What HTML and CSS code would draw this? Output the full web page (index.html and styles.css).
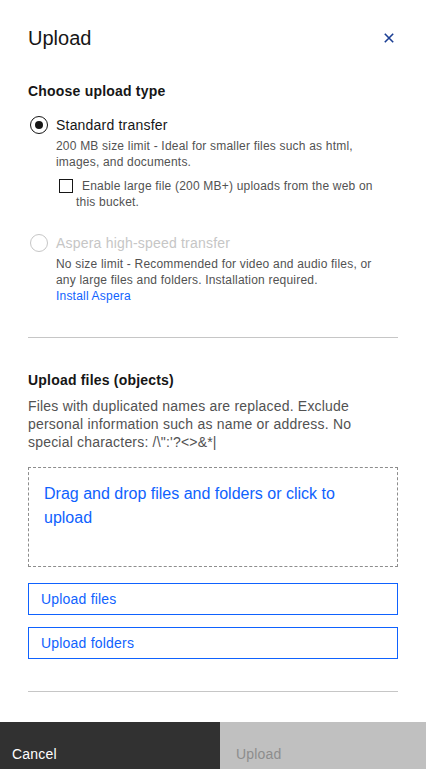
FILE: index.html
```html
<!DOCTYPE html>
<html lang="en">
<head>
<meta charset="utf-8">
<title>Upload</title>
<link rel="stylesheet" href="styles.css">
</head>
<body>
<div class="modal">
  <div class="header">
    <h1 class="title">Upload</h1>
    <button class="close" aria-label="Close">
      <svg width="10" height="10" viewBox="0 0 10 10"><path d="M0.8 0.8L9.2 9.2M9.2 0.8L0.8 9.2" stroke="#1c3f94" stroke-width="1.6" fill="none"/></svg>
    </button>
  </div>
  <div class="content">
    <h2 class="section-title first">Choose upload type</h2>

    <div class="radio-row">
      <span class="radio checked"></span>
      <span class="radio-label">Standard transfer</span>
    </div>
    <div class="option-body">
      <p class="desc">200 MB size limit - Ideal for smaller files such as html, images, and documents.</p>
      <p class="check-line"><span class="checkbox"></span>Enable large file (200 MB+) uploads from the web on this bucket.</p>
    </div>

    <div class="radio-row aspera">
      <span class="radio disabled"></span>
      <span class="radio-label disabled">Aspera high-speed transfer</span>
    </div>
    <div class="option-body">
      <p class="desc">No size limit - Recommended for video and audio files, or any large files and folders. Installation required.<br><a class="link" href="#">Install Aspera</a></p>
    </div>

    <hr class="divider first-divider">

    <h2 class="section-title second">Upload files (objects)</h2>
    <p class="note">Files with duplicated names are replaced. Exclude personal information such as name or address. No special characters: /\":'?&lt;&gt;&amp;*|</p>

    <div class="dropzone">Drag and drop files and folders or click to upload</div>

    <button class="ghost-btn first-btn">Upload files</button>
    <button class="ghost-btn">Upload folders</button>

    <hr class="divider second-divider">
  </div>
  <div class="footer">
    <button class="foot-btn cancel">Cancel</button>
    <button class="foot-btn primary">Upload</button>
  </div>
</div>
</body>
</html>
```

FILE: styles.css
```css
html, body {
  margin: 0;
  padding: 0;
  overflow: hidden;
  background: #ffffff;
}

body {
  font-family: "Liberation Sans", Arial, sans-serif;
  color: #161616;
  letter-spacing: 0.2px;
}

.modal {
  width: 426px;
  height: 769px;
  overflow: hidden;
  display: flex;
  flex-direction: column;
}

.header {
  display: flex;
  justify-content: space-between;
  align-items: center;
  padding: 24px 32px 0 28px;
}

.title {
  margin: 0;
  font-size: 20px;
  line-height: 28px;
  font-weight: 400;
  letter-spacing: 0;
  color: #161616;
}

.close {
  border: 0;
  background: none;
  padding: 0;
  width: 10px;
  height: 10px;
  display: flex;
}

.content {
  padding: 0 28px;
}

.section-title {
  margin: 0;
  font-size: 14px;
  line-height: 18px;
  font-weight: 700;
  color: #161616;
}

.section-title.first {
  margin-top: 30px;
}

.section-title.second {
  margin-top: 33px;
}

.radio-row {
  display: flex;
  align-items: center;
  margin-top: 16px;
}

.radio-row.aspera {
  margin-top: 24px;
}

.radio {
  box-sizing: border-box;
  width: 18px;
  height: 18px;
  border-radius: 50%;
  border: 1px solid #161616;
  margin: 0 8px 0 2px;
  display: flex;
  align-items: center;
  justify-content: center;
}

.radio.checked::after {
  content: "";
  width: 8px;
  height: 8px;
  border-radius: 50%;
  background: #161616;
}

.radio.disabled {
  border-color: #c6c6c6;
}

.radio-label {
  font-size: 14px;
  line-height: 18px;
  color: #161616;
}

.radio-label.disabled {
  color: #c6c6c6;
}

.option-body {
  padding: 0 16px 0 28px;
}

.desc {
  margin: 4px 0 0;
  font-size: 12px;
  line-height: 16px;
  color: #525252;
}

.check-line {
  margin: 8px 0 0;
  padding-left: 20px;
  font-size: 12px;
  line-height: 16px;
  color: #525252;
}

.checkbox {
  display: inline-block;
  box-sizing: border-box;
  width: 14px;
  height: 14px;
  border: 1px solid #161616;
  margin: 0 9px 0 -17px;
  vertical-align: -3px;
}

.link {
  color: #0f62fe;
  text-decoration: none;
}

.divider {
  border: 0;
  border-top: 1px solid #c6c6c6;
  margin: 0;
}

.first-divider {
  margin-top: 33px;
}

.second-divider {
  margin-top: 32px;
}

.note {
  margin: 8px 0 0;
  font-size: 14px;
  line-height: 18px;
  color: #525252;
}

.dropzone {
  box-sizing: border-box;
  height: 100px;
  margin-top: 16px;
  border: 1px dashed #8d8d8d;
  padding: 14px 40px 0 15px;
  font-size: 16px;
  line-height: 24px;
  letter-spacing: 0;
  color: #0f62fe;
}

.ghost-btn {
  display: block;
  box-sizing: border-box;
  width: 100%;
  height: 32px;
  margin-top: 12px;
  border: 1px solid #0f62fe;
  background: #ffffff;
  padding: 0 12px;
  text-align: left;
  font-family: inherit;
  font-size: 14px;
  line-height: 18px;
  letter-spacing: 0.2px;
  color: #0f62fe;
}

.ghost-btn.first-btn {
  margin-top: 16px;
}

.footer {
  margin-top: 30px;
  display: grid;
  grid-template-columns: 220px 1fr;
  flex-shrink: 0;
  height: 64px;
}

.foot-btn {
  border: 0;
  margin: 0;
  text-align: left;
  font-family: inherit;
  font-size: 14px;
  line-height: 18px;
  letter-spacing: 0.2px;
  padding: 23px 12px 23px 12px;
  display: block;
  align-self: stretch;
}

.foot-btn.cancel {
  background: #313131;
  color: #ffffff;
}

.foot-btn.primary {
  background: #c0c0c0;
  color: #8d8d8d;
  padding-left: 16px;
}
```
